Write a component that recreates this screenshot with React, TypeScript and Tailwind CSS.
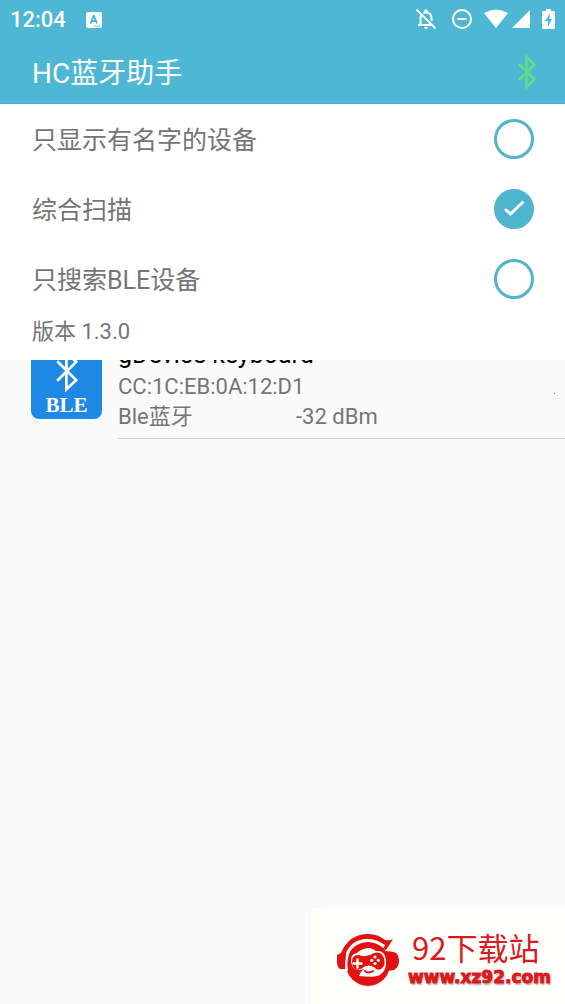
import { useState } from "react";

function BellOffIcon() {
  return (
    <svg className="h-6 w-6" viewBox="0 0 24 24" fill="none" stroke="currentColor" strokeWidth="2" aria-hidden="true">
      <path d="M2.5 2.5 L21.5 21.5" />
      <path d="M4 18 H18 M6.5 17.5 V11 Q6.5 9.3 7.4 8 M9.5 6.2 Q10.8 5.3 12 5.3 Q17.5 5.8 17.5 11.5 V14" />
      <path d="M12 5.5 V2.5" strokeWidth="3" />
      <path d="M10 20 H14 A2 2 0 0 1 10 20 Z" fill="currentColor" stroke="none" />
    </svg>
  );
}

function DoNotDisturbIcon() {
  return (
    <svg className="h-5 w-5" viewBox="0 0 20 20" fill="none" stroke="currentColor" strokeWidth="2" aria-hidden="true">
      <circle cx="10" cy="10" r="9" />
      <path d="M5.5 10 H14.5" />
    </svg>
  );
}

function BluetoothIcon({ className, width }: { className: string; width: number }) {
  return (
    <svg className={className} viewBox="0 0 18 36" fill="none" stroke="currentColor" strokeWidth={width} aria-hidden="true">
      <path d="M1 10 L16.5 25.5 L8.5 33 V3 L16.5 10.5 L1 26" />
    </svg>
  );
}

function StatusBar() {
  return (
    <div className="flex h-10 items-center justify-between pr-[10px] pl-[10px] text-white">
      <div className="flex items-center gap-5">
        <span className="text-[22px] leading-7 font-medium">12:04</span>
        <svg className="h-4 w-4" viewBox="0 0 16 16" aria-hidden="true">
          <rect width="16" height="16" rx="2" fill="currentColor" />
          <path d="M4.5 11.5 L7.5 4 H8 L11 11.5 M5.7 9 H9.8" fill="none" stroke="#4db7d4" strokeWidth="1.8" />
          <path d="M8 14 H14" stroke="#4db7d4" strokeDasharray="1.5 0.7" />
        </svg>
      </div>
      <div className="flex items-center pb-[2px]">
        <BellOffIcon />
        <span className="ml-[14px]">
          <DoNotDisturbIcon />
        </span>
        <svg className="ml-3 h-5 w-6" viewBox="0 0 24 20" fill="currentColor" aria-hidden="true">
          <path d="M0 4 Q12 -3 24 4 L12 19 Z" />
        </svg>
        <svg className="ml-1 h-[18px] w-[18px]" viewBox="0 0 18 18" fill="currentColor" aria-hidden="true">
          <path d="M18 0 V18 H0 Z" />
        </svg>
        <svg className="ml-3 h-5 w-[13px]" viewBox="0 0 13 20" aria-hidden="true">
          <path d="M4 0 H9 V2 H12 Q13 2 13 3 V19 Q13 20 12 20 H1 Q0 20 0 19 V3 Q0 2 1 2 H4 Z" fill="currentColor" />
          <path d="M8 4.5 L3 12 H6 V17.5 L10 10 H7.5 Z" fill="#4db7d4" />
        </svg>
      </div>
    </div>
  );
}

function Option({ id, label, initial }: { id: string; label: string; initial: boolean }) {
  const [checked, setChecked] = useState(initial);
  return (
    <div className="flex h-[70px] items-center justify-between">
      <label htmlFor={id} className="pt-[3px] text-[25px] leading-9">
        {label}
      </label>
      <span className="grid h-10 w-10 place-items-center">
        <input
          id={id}
          type="checkbox"
          checked={checked}
          onChange={(e) => setChecked(e.target.checked)}
          className="col-start-1 row-start-1 h-10 w-10 appearance-none rounded-full border-3 border-[#54b4cc] checked:bg-[#4db5ce]"
        />
        {checked && (
          <svg
            className="pointer-events-none col-start-1 row-start-1 h-5 w-5"
            viewBox="0 0 20 20"
            fill="none"
            stroke="white"
            strokeWidth="3"
            strokeLinecap="round"
            aria-hidden="true"
          >
            <path d="M2 11 L6.5 15 L18.5 3.5" />
          </svg>
        )}
      </span>
    </div>
  );
}

function GamepadMascot() {
  return (
    <svg className="h-[54px] w-[62px] shrink-0" viewBox="0 0 62 54" aria-hidden="true">
      <path d="M4 20 Q12 1 31 1 Q41 1 48 7 Q53 8 56 6 L49 17 L46 16 L48 12 Q40 6 31 6 Q15 6 9 20 L8 36 H3 Q0 34 0 29 V22 Z" fill="#e31212" />
      <circle cx="31" cy="31" r="22" fill="#e31212" />
      <path d="M49 18 L57 19 Q62 21 62 28 Q62 34 57 37 L51 38 Z" fill="#e31212" />
      <path d="M10 21 Q15 9 28 7 Q38 6 46 13" fill="none" stroke="#fffffb" strokeWidth="1.8" />
      <path d="M13 16 Q8 26 10 38" fill="none" stroke="#fffffb" strokeWidth="1.8" />
      <path d="M14 29 Q13 21 20 20 Q25 15 33 15 Q36 16 39 18 Q48 17 49 27 Q50 37 43 42 Q37 45 22 43 Q23 39 27 36 Q16 40 14 29 Z" fill="#fffffb" />
      <path d="M15 29 Q15 22 21 22 Q30 25 37 20 Q44 18 47 25 Q49 33 44 36 Q40 38 37 34 Q31 31 27 34 Q22 38 18 36 Q15 34 15 29 Z" fill="#e31212" />
      <path d="M20.5 26.5 V34.5 M16.5 30.5 H24.5" stroke="#fffffb" strokeWidth="2.4" strokeLinecap="round" />
      <g fill="#fffffb">
        <circle cx="38" cy="24" r="1.6" />
        <circle cx="38" cy="30.5" r="1.6" />
        <circle cx="34.7" cy="27.3" r="1.6" />
        <circle cx="41.3" cy="27.3" r="1.6" />
      </g>
      <path d="M28 38 Q31 41 36 38" stroke="#e31212" strokeWidth="2" fill="none" strokeLinecap="round" />
    </svg>
  );
}

export default function App() {
  return (
    <div className="relative flex min-h-screen flex-col bg-[#fafafa] font-['Roboto','Noto_Sans_CJK_SC',sans-serif] text-[#757575]">
      <header className="border-b border-[#48adc8] bg-[#4db7d4]">
        <StatusBar />
        <div className="flex h-[63px] items-center justify-between pr-[29px] pl-8">
          <h1 className="pt-1 text-[28px] leading-9 text-white">HC蓝牙助手</h1>
          <button type="button" aria-label="蓝牙" className="text-[#5fdc8c]">
            <BluetoothIcon className="h-9 w-[18px]" width={2.8} />
          </button>
        </div>
      </header>

      <main className="relative flex-1">
        <section className="absolute inset-x-0 top-0 z-10 bg-white pr-[31px] pb-[13px] pl-8">
          <div className="flex flex-col">
            <Option id="named" label="只显示有名字的设备" initial={false} />
            <Option id="all" label="综合扫描" initial={true} />
            <Option id="ble" label="只搜索BLE设备" initial={false} />
          </div>
          <p className="pt-[3px] text-[22px] leading-[30px]">版本 1.3.0</p>
        </section>

        <ul className="pt-[234px]">
          <li className="flex gap-4 pl-[31px]">
            <div className="mt-[10px] flex h-[71px] w-[71px] shrink-0 flex-col items-center justify-end rounded-lg bg-[#1e88e5] pb-[2px] text-white">
              <BluetoothIcon className="h-11 w-[22px]" width={2.2} />
              <span className="font-['Liberation_Serif',serif] text-[21px] leading-6 font-bold">BLE</span>
            </div>
            <div className="flex-1 border-b border-[#cfcfcf] pb-[6px] text-[22px] leading-[30px]">
              <h2 className="text-[25px] leading-[34px] text-black">gDevice keyboard</h2>
              <div className="flex items-center justify-between pr-[10px]">
                <span>CC:1C:EB:0A:12:D1</span>
                <span className="mt-3 h-px w-px bg-[#757575]" />
              </div>
              <div className="flex">
                <span className="w-[178px]">Ble蓝牙</span>
                <span>-32 dBm</span>
              </div>
            </div>
          </li>
        </ul>
      </main>

      <a
        href="#xz92"
        className="absolute right-0 bottom-0 flex h-24 w-[254px] items-center gap-[9px] rounded-tl bg-[#fffffb] pt-2 pl-[26px] text-[#d91a1e]"
      >
        <GamepadMascot />
        <span className="flex flex-col gap-[2px] pb-1">
          <span className="pl-1 font-['Noto_Sans_CJK_SC',sans-serif] text-[31px] leading-9">92下载站</span>
          <span className="font-['DejaVu_Sans',sans-serif] text-[17px] leading-5 font-bold [-webkit-text-stroke:1px_#d91a1e] [text-shadow:1px_2px_2px_#00000055]">
            www.xz92.com
          </span>
        </span>
      </a>
    </div>
  );
}
